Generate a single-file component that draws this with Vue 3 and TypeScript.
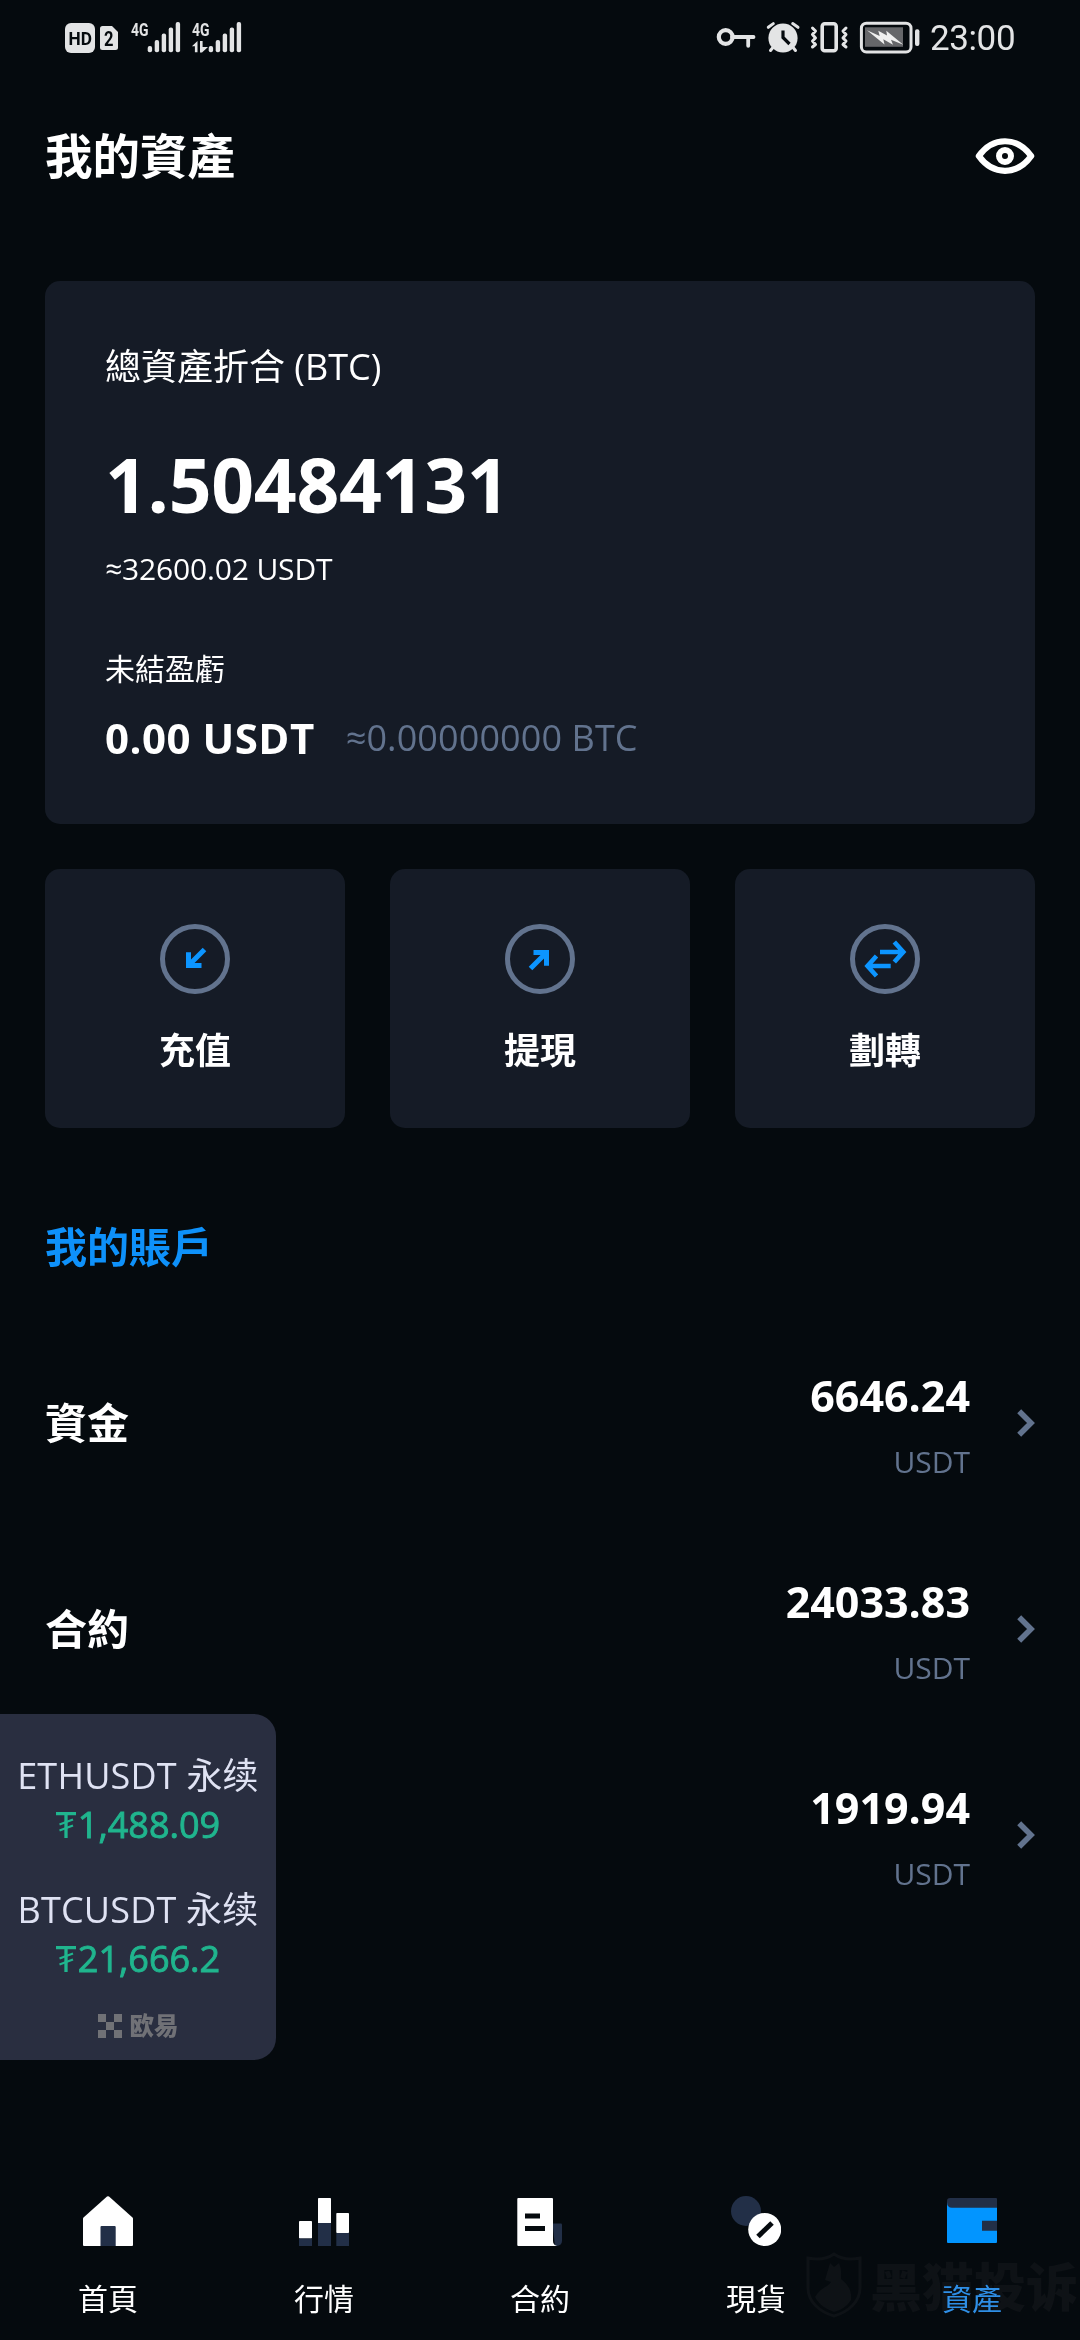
<script setup lang="ts">
type ActionIcon = 'deposit' | 'withdraw' | 'transfer'
type NavIcon = 'home' | 'market' | 'contract' | 'spot' | 'wallet'

interface Action { label: string; icon: ActionIcon }
interface Account { name: string; amount: string }
interface Ticker { pair: string; price: string }
interface NavItem { label: string; icon: NavIcon; active?: boolean }

const actions: Action[] = [
  { label: '充值', icon: 'deposit' },
  { label: '提現', icon: 'withdraw' },
  { label: '劃轉', icon: 'transfer' },
]

const accounts: Account[] = [
  { name: '資金', amount: '6646.24' },
  { name: '合約', amount: '24033.83' },
  { name: '', amount: '1919.94' },
]

const tickers: Ticker[] = [
  { pair: 'ETHUSDT 永续', price: '1,488.09' },
  { pair: 'BTCUSDT 永续', price: '21,666.2' },
]

const navItems: NavItem[] = [
  { label: '首頁', icon: 'home' },
  { label: '行情', icon: 'market' },
  { label: '合約', icon: 'contract' },
  { label: '現貨', icon: 'spot' },
  { label: '資產', icon: 'wallet', active: true },
]

const barTops: number[] = [28, 22, 15.5, 9.5, 4]
</script>

<template>
  <div class="screen">
    <div class="status">
      <svg class="status-left" width="184" height="40" viewBox="0 0 184 40">
        <rect x="3" y="5" width="30" height="30" rx="6" fill="#e3e4e5" />
        <text x="6.6" y="27" class="badge" font-size="19" textLength="23.4" lengthAdjust="spacingAndGlyphs">HD</text>
        <path d="M40.5 8H50l6 6v15.500a2.500 2.500 0 0 1-2.500 2.500H40.500a2.500 2.500 0 0 1-2.500-2.500V10.500A2.500 2.500 0 0 1 40.500 8z" fill="#e3e4e5" />
        <text x="42" y="28" class="badge" font-size="21" textLength="9.500" lengthAdjust="spacingAndGlyphs">2</text>
        <g v-for="x in [0, 61]" :key="x">
          <text :x="69 + x" y="17.500" class="net" textLength="17.500" lengthAdjust="spacingAndGlyphs">4G</text>
          <rect v-for="(top, i) in barTops" :key="i" :x="85.700 + x + i * 7" :y="top" width="4.400" :height="34.300 - top" rx="2" fill="#e3e4e5" />
        </g>
        <path d="M135.500 23v11.200h-2.600v-6h-3zM138 23h2.600v6l5.400 0-6 5.400H138z" fill="#e3e4e5" />
      </svg>
      <div class="status-right">
        <svg width="210" height="40" viewBox="0 0 210 40" fill="none" stroke="#e3e4e5">
          <circle cx="12.700" cy="19" r="6.900" stroke-width="4.200" />
          <path d="M19 19H40.500M35.200 19V27.800" stroke-width="3.800" stroke-linecap="round" />
          <circle cx="70" cy="20" r="14.600" fill="#e3e4e5" stroke="none" />
          <path d="M55.300 9.300L60.300 5.600M79.700 5.600L85 9.300" stroke-width="3" stroke-linecap="round" />
          <path d="M59.500 30L57.500 32.500M80.500 30L82.500 32.500" stroke-width="3" stroke-linecap="round" />
          <path d="M70 12.500V19.500L76.500 26" stroke="#050a0e" stroke-width="3.200" />
          <rect x="109.200" y="5.800" width="14" height="27" rx="2.500" stroke-width="3.600" />
          <path d="M99.500 10L102.500 13L99.500 16.500L102.500 20L99.500 23L102.500 26.500L99.500 29M133 10L130 13L133 16.500L130 20L133 23L130 26.500L133 29" stroke-width="3" stroke-linecap="round" stroke-linejoin="round" />
          <rect x="148.400" y="5.200" width="49.600" height="28.800" rx="5" stroke-width="3" />
          <rect x="152" y="9.300" width="38" height="19.500" fill="#66676a" stroke="none" />
          <path d="M154 12.300L166.700 18L165.300 12.700L174 17.500L173.300 12.700L190.300 26.700L178 21.800L180 26.700L170.300 21.300L171.500 26.500z" fill="#f0f0f0" stroke="none" />
          <rect x="202" y="11.300" width="4.400" height="16.800" rx="2" fill="#e3e4e5" stroke="none" />
        </svg>
        <span class="clock">23:00</span>
      </div>
    </div>

    <header class="header">
      <h1>我的資產</h1>
      <svg width="60" height="36" viewBox="0 0 60 36" fill="none" stroke="#fff">
        <path d="M3.800 18C18 -1.700 42 -1.700 56.200 18C42 37.700 18 37.700 3.800 18z" stroke-width="6.200" stroke-linejoin="round" />
        <circle cx="30" cy="18" r="6" stroke-width="6" />
      </svg>
    </header>

    <section class="card">
      <div class="total-label">總資產折合 (BTC)</div>
      <div class="total">1.50484131</div>
      <div class="total-usdt">≈32600.02 USDT</div>
      <div class="pnl-label">未結盈虧</div>
      <div class="pnl">
        <span class="pnl-main">0.00 USDT</span>
        <span class="pnl-sub">≈0.00000000 BTC</span>
      </div>
    </section>

    <div class="actions">
      <button v-for="a in actions" :key="a.icon" class="action" type="button">
        <svg width="70" height="70" viewBox="0 0 70 70" fill="none" stroke="#0c95ff" stroke-width="5">
          <circle cx="35" cy="35" r="32.500" stroke="#62738e" />
          <path v-if="a.icon === 'deposit'" d="M28.500 28.300V41.500H41.500M28.500 41.500L44.500 25.500" />
          <path v-else-if="a.icon === 'withdraw'" d="M41.500 41.700V28.500H28.500M41.500 28.500L25.500 44.500" />
          <path v-else d="M30 28H53M44.300 18L53.300 28L44.300 38M40.700 42H17.500M26.500 32L17.500 42L26.500 52" stroke-width="4.600" />
        </svg>
        <span>{{ a.label }}</span>
      </button>
    </div>

    <h2>我的賬戶</h2>

    <div class="accounts">
      <div v-for="acc in accounts" :key="acc.amount" class="account">
        <span class="account-name">{{ acc.name }}</span>
        <div class="account-value">
          <span class="amount">{{ acc.amount }}</span>
          <span class="unit">USDT</span>
        </div>
        <svg width="18" height="28" viewBox="0 0 18 28" fill="none" stroke="#62738e" stroke-width="5.600">
          <path d="M2.200 2.200L14 14L2.200 25.800" />
        </svg>
      </div>
    </div>

    <nav class="nav">
      <div v-for="n in navItems" :key="n.icon" class="nav-item" :class="{ active: n.active }">
        <svg width="50" height="50" viewBox="0 0 50 50" fill="#fff">
          <template v-if="n.icon === 'home'">
            <path d="M24 .6Q25 -.2 26 .6L49.500 21.500Q50 22 50 22.800V49Q50 50 49 50H1Q0 50 0 49V22.800Q0 22 .5 21.500z" />
            <path d="M17.500 50V31q0-1 1-1h13.200q1 0 1 1v19z" fill="#222f47" />
          </template>
          <template v-else-if="n.icon === 'market'">
            <rect y="25" width="13" height="17.500" rx=".8" />
            <rect y="42.500" width="13" height="7.500" fill="#222f47" />
            <rect x="19" y="2" width="13" height="25.500" rx=".8" />
            <rect x="19" y="27" width="13" height="23" fill="#222f47" />
            <rect x="37.300" y="17" width="12.700" height="20" rx=".8" />
            <rect x="37.300" y="37" width="12.700" height="13" fill="#222f47" />
          </template>
          <template v-else-if="n.icon === 'contract'">
            <path d="M37.500 27.500H46q1 0 1 1V45a5 5 0 0 1-5 5h-2z" fill="#222f47" />
            <path d="M3.300 2H37q1 0 1 1V45q0 4 4 5H3.300Q2.300 50 2.300 49V3Q2.300 2 3.300 2z" />
            <path d="M10 17.500h15v5H10zM10 30h20v5H10z" fill="#050a0e" />
          </template>
          <template v-else-if="n.icon === 'spot'">
            <circle cx="15" cy="15" r="15" fill="#222f47" />
            <circle cx="33.700" cy="33.500" r="16.500" />
            <path d="M27 40.500L41 27" stroke="#050a0e" stroke-width="5" />
          </template>
          <template v-else>
            <path d="M3 2H49q1 0 1 1V12H0V5Q0 2 3 2zM34 24H50V36H34z" fill="#222f47" />
            <path d="M0 6Q0 11.800 5 11.800H50V24.800H35V34.800H50V46q0 1-1 1H1q-1 0-1-1z" fill="#0295ff" />
          </template>
        </svg>
        <span>{{ n.label }}</span>
      </div>
    </nav>

    <aside class="floating">
      <div v-for="t in tickers" :key="t.pair" class="ticker">
        <span class="pair">{{ t.pair }}</span>
        <span class="price">
          <svg width="20" height="26" viewBox="0 0 20 26" fill="none" stroke="#20b58e">
            <path d="M0 1.500H20M10 1.500V26" stroke-width="3.300" />
            <path d="M3.500 12.500L17 7.500M3.500 18.500L17 13.500" stroke-width="2.300" />
          </svg>{{ t.price }}
        </span>
      </div>
      <div class="brand">
        <svg width="24" height="24" viewBox="0 0 24 24" fill="#707176">
          <path d="M0 0h8v8h-8zM16 0h8v8h-8zM8 8h8v8h-8zM0 16h8v8h-8zM16 16h8v8h-8z" />
        </svg>
        <span>欧易</span>
      </div>
    </aside>

    <div class="watermark">
      <svg width="56" height="66" viewBox="0 0 56 66" fill="none" stroke="#0e1216" stroke-width="3">
        <path d="M28 2C21 7 11 8 2 6V36C2 50 14 60 28 64C42 60 54 50 54 36V6C45 8 35 7 28 2z" />
        <path d="M24 11L28 15L33 11C36 18 35 22 35 27C43 33 46 40 45 48C40 56 34 58 28 60C20 57 13 53 9 45C16 34 21 36 25 30L19 28z" fill="#0e1216" stroke="none" />
      </svg>
      <span>黑猫投诉</span>
    </div>
  </div>
</template>

<style>
body {
  background: #050a0e;
}
</style>

<style scoped>
.screen {
  position: relative;
  display: flex;
  flex-direction: column;
  width: 1080px;
  height: 2340px;
  box-sizing: border-box;
  padding: 0 45px;
  overflow: hidden;
  background: #050a0e;
  color: #fff;
  font-family: "Open Sans", "Noto Sans CJK TC", sans-serif;
  white-space: nowrap;
}
svg {
  display: block;
  flex: none;
}
h1, h2 {
  margin: 0;
}
.status {
  display: flex;
  justify-content: space-between;
  height: 57px;
  padding: 18px 13px 0 17px;
}
.badge {
  font-family: Roboto, sans-serif;
  font-weight: 700;
  fill: #050a0e;
}
.net {
  font-family: Roboto, sans-serif;
  font-weight: 700;
  font-size: 19px;
  fill: #e3e4e5;
}
.status-right {
  display: flex;
}
.clock {
  width: 92px;
  margin-left: 7px;
  font-family: Roboto, sans-serif;
  font-size: 35px;
  line-height: 42px;
  letter-spacing: -0.4px;
  color: #e3e4e5;
}
.header {
  display: flex;
  align-items: center;
  justify-content: space-between;
  height: 161px;
}
h1 {
  font-size: 47.5px;
  line-height: 60px;
  font-weight: 700;
}
.card {
  box-sizing: border-box;
  height: 543px;
  margin-top: 45px;
  padding: 61px 60px;
  border-radius: 15px;
  background: #151b26;
}
.total-label {
  font-size: 36px;
  line-height: 50px;
}
.total {
  margin-top: 52px;
  font-size: 75px;
  line-height: 80px;
  font-weight: 700;
  letter-spacing: -0.3px;
}
.total-usdt {
  margin-top: 25px;
  font-size: 30px;
  line-height: 40px;
  letter-spacing: -0.15px;
}
.pnl-label {
  margin-top: 60px;
  font-size: 30px;
  line-height: 40px;
}
.pnl {
  display: flex;
  gap: 31px;
  margin-top: 24px;
  line-height: 50px;
}
.pnl-main {
  font-size: 42px;
  font-weight: 700;
  letter-spacing: 0.5px;
}
.pnl-sub {
  font-size: 36px;
  letter-spacing: 0.1px;
  color: #62738e;
}
.actions {
  display: flex;
  gap: 45px;
  margin-top: 45px;
}
.action {
  display: flex;
  flex: 1;
  flex-direction: column;
  align-items: center;
  gap: 32px;
  height: 259px;
  padding: 55px 0 0;
  border: 0;
  border-radius: 15px;
  background: #151b26;
  color: #fff;
  font: 700 36px/50px "Open Sans", "Noto Sans CJK TC", sans-serif;
}
h2 {
  margin-top: 89px;
  font-size: 42px;
  line-height: 60px;
  font-weight: 700;
  color: #0e91fa;
}
.accounts {
  margin-top: 43px;
}
.account {
  display: flex;
  align-items: center;
  height: 206px;
}
.account-name {
  font-size: 42px;
  line-height: 60px;
  font-weight: 700;
}
.account-value {
  display: flex;
  flex-direction: column;
  align-items: flex-end;
  gap: 21px;
  margin: 7px 47px 0 auto;
}
.amount {
  font-size: 43px;
  line-height: 50px;
  font-weight: 700;
}
.unit {
  font-size: 30px;
  line-height: 40px;
  color: #62738e;
}
.nav {
  display: flex;
  height: 144px;
  margin: auto -45px 0;
}
.nav-item {
  display: flex;
  flex: 1;
  flex-direction: column;
  align-items: center;
  gap: 33px;
  font-size: 30px;
  line-height: 40px;
}
.nav-item.active {
  color: #2f8fe6;
}
.floating {
  position: absolute;
  left: 0;
  top: 1714px;
  display: flex;
  flex-direction: column;
  align-items: center;
  box-sizing: border-box;
  width: 276px;
  height: 346px;
  padding-top: 37px;
  border-radius: 0 22px 22px 0;
  background: #292e40;
  font-family: "Open Sans", "Noto Sans CJK SC", sans-serif;
}
.ticker {
  display: flex;
  flex-direction: column;
  align-items: center;
  height: 134px;
  line-height: 50px;
  font-size: 36px;
}
.pair {
  letter-spacing: 0.2px;
  color: #dfe2f3;
}
.price {
  display: flex;
  align-items: center;
  gap: 2px;
  margin-top: -1px;
  color: #20b58e;
  -webkit-text-stroke: 0.9px #20b58e;
}
.brand {
  display: flex;
  align-items: center;
  gap: 8px;
  margin-top: -9px;
  font-size: 24.5px;
  line-height: 32px;
  font-weight: 900;
  color: #707176;
}
.watermark {
  position: absolute;
  left: 806px;
  top: 2252px;
  display: flex;
  align-items: center;
  gap: 8px;
  color: #0e1216;
  font: 900 52px/66px "Noto Sans CJK SC", sans-serif;
  mix-blend-mode: lighten;
}
</style>
